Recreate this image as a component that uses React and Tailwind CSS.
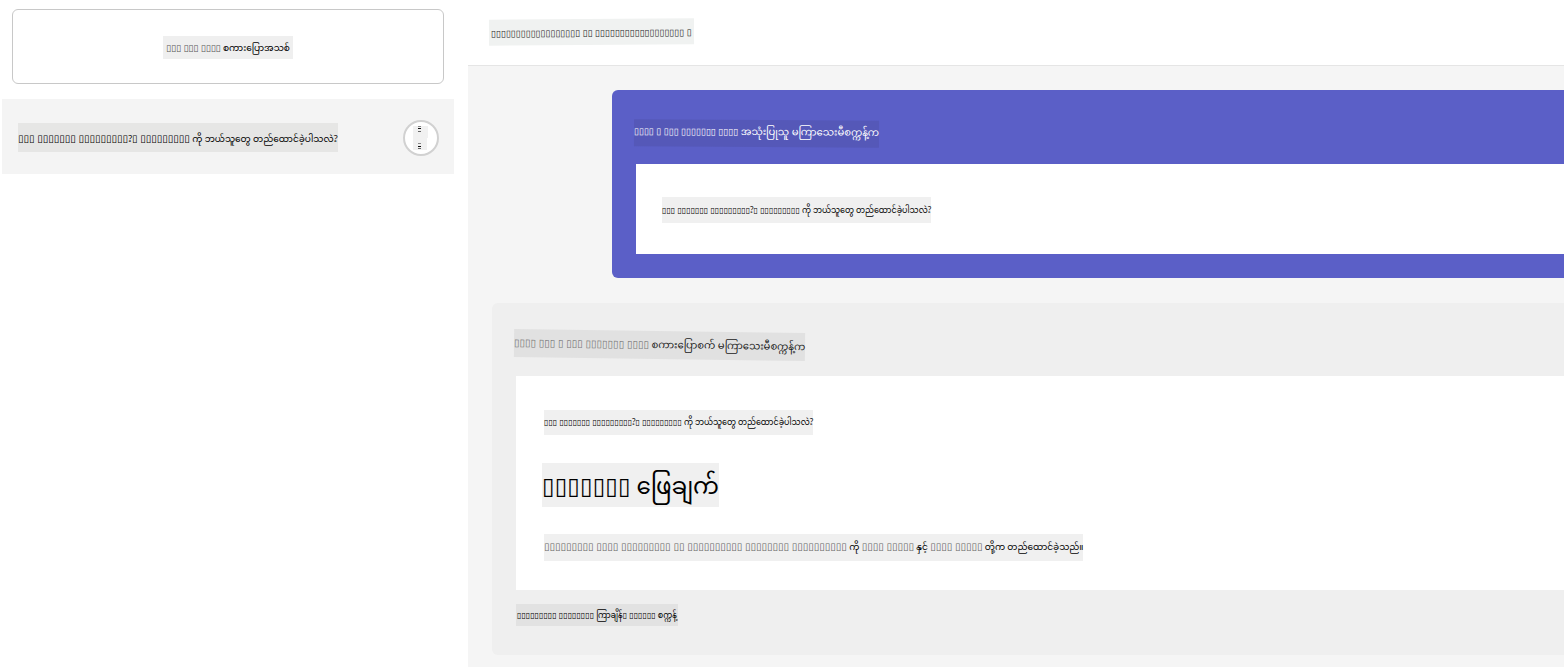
const MYANMAR = "font-['Noto_Sans_Myanmar','Liberation_Sans',sans-serif]";

function Boxes({ groups, className = '' }) {
  return (
    <span className={`font-['Liberation_Sans','DejaVu_Sans',sans-serif] ${className}`}>
      {groups.map((n) => '▯'.repeat(n)).join(' ')}
    </span>
  );
}

function Label({ className = '', children }) {
  return <span className={`flex w-fit items-center whitespace-pre ${className}`}>{children}</span>;
}

function Question({ boxes }) {
  return (
    <span>
      <Boxes groups={[3, 7, 9]} className={boxes} />?<Boxes groups={[1, 9]} className={boxes} />
      {' ကို ဘယ်သူတွေ တည်ထောင်ခဲ့ပါသလဲ?'}
    </span>
  );
}

function Sidebar() {
  return (
    <aside className="w-[468px] shrink-0 bg-white pt-[9px]">
      <button
        type="button"
        className="mr-6 ml-3 flex h-[75px] w-[432px] items-center justify-center rounded-md border border-[#c8c8c8] bg-white pt-px"
      >
        <Label className="h-[23px] bg-[#efefef] px-[3px] pt-1 text-[9px]">
          <span>
            <Boxes groups={[3, 3, 4]} className="text-[9px] text-[#555]" />
            {' စကားပြောအသစ်'}
          </span>
        </Label>
      </button>
      <div className="mt-[15px] mr-[14px] ml-[2px] flex h-[75px] items-center justify-between bg-[#f4f4f4] pt-[3px] pr-[15px] pb-px pl-4">
        <a href="#chat">
          <Label className="h-[29px] bg-[#e6e6e5] pt-1 text-[9px]">
            <Question boxes="text-[10px]" />
          </Label>
        </a>
        <button
          type="button"
          aria-label="မီနူး"
          className="flex size-9 items-center justify-center rounded-full border-2 border-[#d1d1d1] bg-white"
        >
          <svg width="16" height="26" viewBox="0 0 16 26" shapeRendering="crispEdges">
            <path d="M0 1h15v12h-1v12H0z" fill="#f1f1f1" />
            <path d="M5 1.5h3M5 18.5h3" stroke="#888" />
            <path d="M5 3.5h3M5 21.5h3" stroke="#111" />
            <path d="M5 6.5h3M5 23.5h3" stroke="#666" />
          </svg>
        </button>
      </div>
    </aside>
  );
}

export default function App() {
  return (
    <div className={`flex min-h-screen overflow-hidden bg-white text-black ${MYANMAR}`}>
      <Sidebar />
      <main className="min-w-0 flex-1 bg-[#f5f5f5]">
        <header className="flex h-[66px] items-center border-b border-[#e5e5e5] bg-white pb-[2px] pl-[21px]">
          <h1>
            <Label className="h-[26px] -rotate-[0.4deg] bg-[#f0f2f1] px-[2px] pt-1 text-[9px]">
              <Boxes groups={[18, 2, 18, 1]} className="text-[9px] text-[#222]" />
            </Label>
          </h1>
        </header>

        <section className="mt-6 ml-36 rounded-l-md bg-[#5b5fc7] pt-[30px] pb-6 pl-6 text-white">
          <Label className="-ml-[2px] h-[27px] rotate-[0.4deg] bg-[#5558b8] text-[10px]">
            <span>
              <Boxes groups={[4, 1, 3, 7, 4]} className="text-[9px]" />
              {' အသုံးပြုသူ မကြာသေးမီစက္ကန့်က'}
            </span>
          </Label>
          <div className="mt-[17px] flex h-[90px] items-center bg-white pt-px pl-[26px] text-black">
            <Label className="h-[26px] bg-[#f0f0f0] pt-[3px] text-[8px]">
              <Question boxes="text-[8px]" />
            </Label>
          </div>
        </section>

        <section className="mt-[25px] mb-3 ml-6 rounded-l-md bg-[#efefef] pt-7 pb-[29px] pl-6">
          <Label className="-ml-[2px] h-7 rotate-[0.8deg] bg-[#e1e1e1] text-[10px] text-[#222]">
            <span>
              <Boxes groups={[4, 3, 1, 3, 7, 4]} className="text-[10px] text-[#777]" />
              {' စကားပြောစက် မကြာသေးမီစက္ကန့်က'}
            </span>
          </Label>
          <article className="mt-[17px] bg-white pt-[34px] pb-[29px] pl-7">
            <p>
              <Label className="h-[25px] bg-[#f0f0f0] text-[8px]">
                <Question boxes="text-[8px]" />
              </Label>
            </p>
            <h2 className="mt-7 -ml-[2px]">
              <Label className="h-11 bg-[#f0f0f0] pt-1 text-[23px] leading-10">
                <span>
                  <Boxes groups={[7]} className="text-[23px]" />
                  {' ဖြေချက်'}
                </span>
              </Label>
            </h2>
            <p className="mt-[27px]">
              <Label className="h-[27px] bg-[#f0f0f0] text-[9px]">
                <span>
                  <Boxes groups={[9, 4, 9, 2, 10, 8, 10]} className="text-[10px] text-[#666]" />
                  {' ကို '}
                  <Boxes groups={[4, 5]} className="text-[10px] text-[#666]" />
                  {' နှင့် '}
                  <Boxes groups={[4, 5]} className="text-[10px] text-[#666]" />
                  {' တို့က တည်ထောင်ခဲ့သည်။'}
                </span>
              </Label>
            </p>
          </article>
          <p className="mt-[14px]">
            <Label className="h-[22px] bg-[#e2e2e2] px-px pt-[2px] text-[8px]">
              <span>
                <Boxes groups={[9, 8]} className="text-[8px]" />
                {' ကြာချိန်'}
                <Boxes groups={[1, 6]} className="text-[8px]" />
                {' စက္ကန့်'}
              </span>
            </Label>
          </p>
        </section>
      </main>
    </div>
  );
}
